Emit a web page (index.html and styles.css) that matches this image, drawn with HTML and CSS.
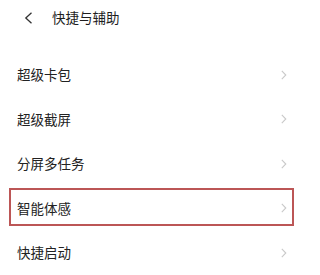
FILE: index.html
```html
<!DOCTYPE html>
<html lang="zh">
<head>
<meta charset="utf-8">
<link rel="stylesheet" href="styles.css">
</head>
<body>
<div class="page">
  <div class="header">
    <svg class="back" width="9" height="12" viewBox="0 0 9 12"><path d="M7.5 0.8 L1.8 6 L7.5 11.2" fill="none" stroke="#333" stroke-width="1.3"/></svg>
    <span class="title">快捷与辅助</span>
  </div>
  <ul class="list">
    <li class="row"><span>超级卡包</span><svg class="chev" width="6" height="10" viewBox="0 0 6 10"><path d="M0.8 0.8 L4.8 5 L0.8 9.2" fill="none" stroke="#c9c9c9" stroke-width="1.1"/></svg></li>
    <li class="row"><span>超级截屏</span><svg class="chev" width="6" height="10" viewBox="0 0 6 10"><path d="M0.8 0.8 L4.8 5 L0.8 9.2" fill="none" stroke="#c9c9c9" stroke-width="1.1"/></svg></li>
    <li class="row"><span>分屏多任务</span><svg class="chev" width="6" height="10" viewBox="0 0 6 10"><path d="M0.8 0.8 L4.8 5 L0.8 9.2" fill="none" stroke="#c9c9c9" stroke-width="1.1"/></svg></li>
    <li class="row highlighted"><span>智能体感</span><svg class="chev" width="6" height="10" viewBox="0 0 6 10"><path d="M0.8 0.8 L4.8 5 L0.8 9.2" fill="none" stroke="#c9c9c9" stroke-width="1.1"/></svg></li>
    <li class="row"><span>快捷启动</span><svg class="chev" width="6" height="10" viewBox="0 0 6 10"><path d="M0.8 0.8 L4.8 5 L0.8 9.2" fill="none" stroke="#c9c9c9" stroke-width="1.1"/></svg></li>
  </ul>
</div>
</body>
</html>
```
FILE: styles.css
```css
html, body {
  margin: 0;
  padding: 0;
  background: #ffffff;
}
.page {
  width: 302px;
  height: 275px;
  overflow: hidden;
  font-family: "Noto Sans CJK SC", "Noto Sans", sans-serif;
  color: #222222;
}
.header {
  height: 36px;
  display: flex;
  align-items: center;
  padding-left: 24px;
}
.back {
  display: block;
}
.title {
  margin-left: 19px;
  font-size: 13.5px;
  line-height: 1;
  color: #1e1e1e;
}
.list {
  list-style: none;
  margin: 0;
  padding: 16.5px 0 0 0;
}
.row {
  position: relative;
  height: 44.5px;
  display: flex;
  align-items: center;
  justify-content: space-between;
  padding: 0 15px 0 17px;
  font-size: 13.5px;
  line-height: 1;
}
.chev {
  display: block;
}
.highlighted::after {
  content: "";
  position: absolute;
  left: 9px;
  right: 8px;
  top: 2px;
  bottom: 5px;
  border: 2.5px solid #bc5656;
}
```
